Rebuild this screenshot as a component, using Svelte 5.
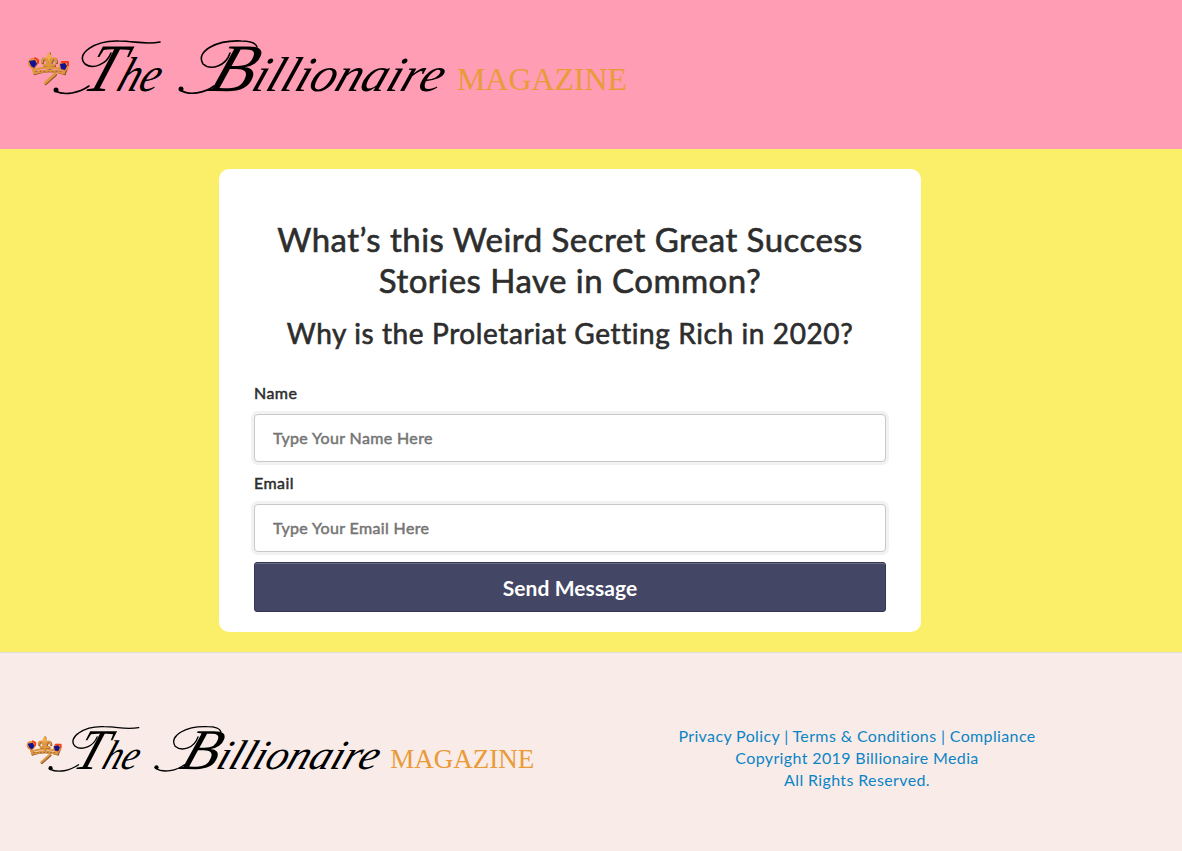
<script>
  const fields = [
    { id: 'name', label: 'Name', type: 'text', hint: 'Type Your Name Here' },
    { id: 'email', label: 'Email', type: 'email', hint: 'Type Your Email Here' }
  ];
</script>

{#snippet logo()}
  <svg class="logo" viewBox="0 0 602 60" role="img" aria-label="The Billionaire Magazine">
    <g stroke-linecap="round" stroke-linejoin="round">
      <g fill="none" stroke="#8b542c" stroke-width="2.6" transform="translate(.8 .9)">
        <path d="M7 33 5 27M37 33 39 28M7 34Q22 28 37 34M22 14V29M15 23Q15 18 19 20L21 25M29 23Q29 18 25 20L23 25M17 26H27M28 35 18 44" />
      </g>
      <g fill="none" stroke="#df963f" stroke-width="2.4">
        <path d="M7 33 5 27M37 33 39 28M7 31Q22 26 37 31M7 34Q22 30 37 34M22 15V29M15 23Q15 18 19 20L21 25M29 23Q29 18 25 20L23 25M17 26H27M28 35 18 44" />
      </g>
      <path d="M22 13 25 18 22 22 19 18Z" fill="#efab4d" />
      <path d="M9 32.500H35" stroke="#a86a32" stroke-width="1.200" stroke-dasharray="1 3" fill="none" />
      <circle cx="6" cy="24" r="5.200" fill="#e98b3b" />
      <circle cx="37" cy="27" r="5" fill="#e98b3b" />
      <path d="M8 19 11 21 11 24M35 23 41 23 41 26" fill="none" stroke="#f53a18" stroke-width="2" />
      <path d="M2 22 8 21 10 25 7 29 4 27ZM33 25 38 24 40 27 38 31 34 30Z" fill="#10138f" />
    </g>
    <g class="flourish">
      <path d="M62 47C52 54 38 57 28 52" />
      <path d="M84 14C80 25 66 31 58 25C48 15 68 1 92 2C108 2 118 6 133 3" />
      <path d="M187 47C178 54 162 57 153 51" />
      <path d="M203 14C199 27 184 32 176 25C168 12 190 1 214 2C223 2 229 4 230 8" />
      <circle cx="29" cy="51" r="2.500" />
      <circle cx="154" cy="50" r="2.500" />
    </g>
    <g class="script">
      <text transform="translate(54 52) skewX(-20)" textLength="75" lengthAdjust="spacingAndGlyphs"><tspan font-size="68">T</tspan><tspan font-size="49">he</tspan></text>
      <text transform="translate(179 52) skewX(-20)" textLength="233" lengthAdjust="spacingAndGlyphs"><tspan font-size="68">B</tspan><tspan font-size="49">illionaire</tspan></text>
    </g>
    <text class="caps" x="430" y="51" font-size="32" textLength="170" lengthAdjust="spacing">MAGAZINE</text>
  </svg>
{/snippet}

<header>{@render logo()}</header>

<main>
  <form class="card" onsubmit={(e) => e.preventDefault()}>
    <h1>What’s this Weird Secret Great Success<br />Stories Have in Common?</h1>
    <h2>Why is the Proletariat Getting Rich in 2020?</h2>
    {#each fields as f}
      <label for={f.id}>{f.label}</label>
      <input id={f.id} type={f.type} placeholder={f.hint} />
    {/each}
    <button type="submit">Send Message</button>
  </form>
</main>

<footer>
  <div class="brand">{@render logo()}</div>
  <p>
    Privacy Policy | Terms &amp; Conditions | Compliance<br />
    Copyright 2019 Billionaire Media<br />
    All Rights Reserved.
  </p>
</footer>

<style>
  :global(body) {
    margin: 0;
    background: #f9ece8;
    font-family: Lato, "Open Sans", sans-serif;
    color: #2d2d2d;
  }
  * {
    box-sizing: border-box;
  }
  header {
    height: 149px;
    padding: 39px 0 0 27px;
    background: #ff9db5;
  }
  .logo {
    display: block;
    width: 602px;
    overflow: visible;
  }
  .script {
    font-family: "Liberation Serif", serif;
    font-style: italic;
    fill: #000;
  }
  .flourish path {
    fill: none;
    stroke: #000;
    stroke-width: 1.6;
    stroke-linecap: round;
  }
  .caps {
    font-family: "Liberation Serif", serif;
    fill: #e99b38;
  }
  main {
    height: 504px;
    padding: 20px 0 0 219px;
    background: #fbee68;
    border-bottom: 1px solid #dedede;
  }
  .card {
    width: 702px;
    height: 463px;
    padding: 50px 35px 0;
    background: #fff;
    border-radius: 10px;
    display: flex;
    flex-direction: column;
  }
  h1,
  h2 {
    margin: 0;
    text-align: center;
    font-weight: 400;
    white-space: nowrap;
    -webkit-text-stroke: 0.6px #2d2d2d;
  }
  h1 {
    font-size: 33px;
    line-height: 41px;
    letter-spacing: 0.47px;
  }
  h2 {
    margin-top: 14px;
    font-size: 28px;
    line-height: 36px;
    letter-spacing: 0.6px;
  }
  label {
    margin-top: 10px;
    height: 32px;
    font-size: 16px;
    line-height: 22px;
    letter-spacing: 0.45px;
    -webkit-text-stroke: 0.5px #2d2d2d;
  }
  h2 + label {
    margin-top: 31px;
  }
  input {
    height: 48px;
    padding: 0 18px 2px;
    border: 1px solid #c8c8c8;
    border-radius: 4px;
    box-shadow: 0 0 0 3px #f2f2f2;
    font: 16px Lato, sans-serif;
    letter-spacing: 0.36px;
    outline: none;
  }
  input::placeholder {
    color: #757575;
    opacity: 1;
    -webkit-text-stroke: 0.5px #757575;
  }
  button {
    height: 50px;
    margin-top: 10px;
    padding: 0;
    border: 1px solid #323650;
    border-radius: 3px;
    background: #434765;
    box-shadow: inset 0 1px 0 #6b6e87;
    color: #fff;
    font: 700 21px Lato, sans-serif;
    letter-spacing: 0.1px;
  }
  footer {
    height: 198px;
    display: flex;
    align-items: flex-start;
    padding: 72px 0 0 26px;
    background: #f9ece8;
  }
  .brand {
    width: 510px;
  }
  .brand .logo {
    width: 510px;
  }
  p {
    width: 642px;
    margin: 0;
    text-align: center;
    color: #0b84c6;
    font-size: 16px;
    line-height: 22px;
    letter-spacing: 0.37px;
  }
</style>
